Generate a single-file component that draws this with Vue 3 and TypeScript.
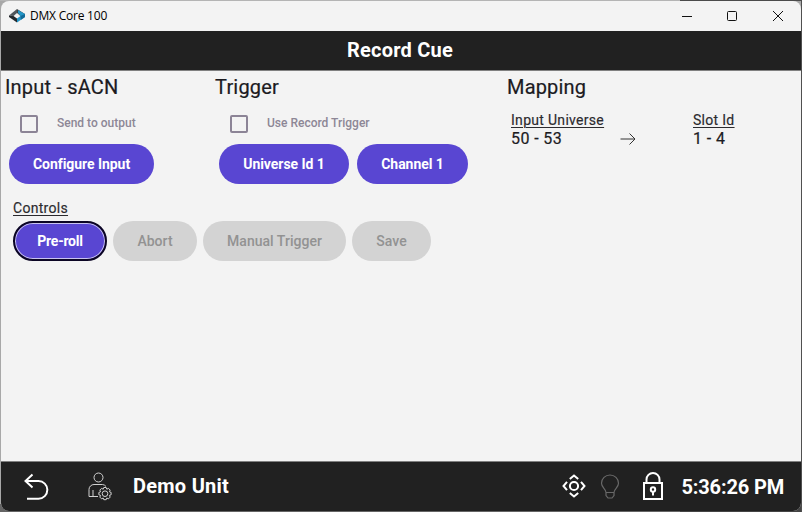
<script setup lang="ts">
import { ref } from 'vue'

interface ControlAction {
  label: string
  enabled: boolean
}

const sendToOutput = ref(false)
const useTrigger = ref(false)
const controls: ControlAction[] = [
  { label: 'Pre-roll', enabled: true },
  { label: 'Abort', enabled: false },
  { label: 'Manual Trigger', enabled: false },
  { label: 'Save', enabled: false },
]
</script>

<template>
  <div class="desktop">
    <div class="window">
      <div class="titlebar">
        <svg class="logo" width="16" height="14" viewBox="0 0 16 14">
          <path d="M0 6.5 8 0v4L4.5 7z" fill="#50565b" />
          <path d="M0 6.5 4.5 7 8 9.5V13.500L0 8z" fill="#24282c" />
          <path d="M8 0l8 5-4.500 2L8 4z" fill="#3d4246" />
          <path d="M9 1l7 4v3l-8 5.500v-4L11.500 7 9 4z" fill="#2396c8" />
          <path d="M11.500 7 16 5v3l-4 2.800z" fill="#126a98" />
        </svg>
        <span class="app-name">DMX Core 100</span>
        <div class="caption-buttons">
          <svg width="10" height="10" viewBox="0 0 10 10"><path d="M0 5.500h10" /></svg>
          <svg width="10" height="10" viewBox="0 0 10 10"><rect x=".5" y=".5" width="9" height="9" rx="1" /></svg>
          <svg width="10" height="10" viewBox="0 0 10 10"><path d="M0 0l10 10M10 0L0 10" /></svg>
        </div>
      </div>

      <header class="page-header"><span>Record Cue</span></header>

      <main class="content">
        <div class="columns">
          <section class="input">
            <h2 class="h-input">Input - sACN</h2>
            <div class="check" @click="sendToOutput = !sendToOutput">
              <span class="box" :class="{ checked: sendToOutput }"></span>
              <span class="l-send">Send to output</span>
            </div>
            <div class="buttons"><button class="pill w-config">Configure Input</button></div>
          </section>
          <section class="trigger">
            <h2 class="h-trigger">Trigger</h2>
            <div class="check" @click="useTrigger = !useTrigger">
              <span class="box" :class="{ checked: useTrigger }"></span>
              <span class="l-use">Use Record Trigger</span>
            </div>
            <div class="buttons">
              <button class="pill w-universe">Universe Id 1</button>
              <button class="pill w-channel">Channel 1</button>
            </div>
          </section>
          <section class="mapping">
            <h2 class="h-mapping">Mapping</h2>
            <div class="map-grid">
              <span class="caption">Input Universe</span>
              <span></span>
              <span class="caption">Slot Id</span>
              <span class="value">50 - 53</span>
              <svg class="arrow" width="16" height="14" viewBox="0 0 16 14"><path d="M.5 7h14.500M9.500 1.500 15 7l-5.500 5.500" /></svg>
              <span class="value">1 - 4</span>
            </div>
          </section>
        </div>
        <div class="controls">
          <span class="caption">Controls</span>
          <div class="control-row">
            <button
              v-for="(c, i) in controls"
              :key="c.label"
              class="pill"
              :class="['c' + i, { focused: i === 0 }]"
              :disabled="!c.enabled"
            >{{ c.label }}</button>
          </div>
        </div>
      </main>

      <footer class="footer">
        <svg class="back" width="26" height="28" viewBox="0 0 26 28">
          <path d="M8.500 1.500 1.500 8l7 6.500M1.800 8H14.500a8.800 8.800 0 0 1 0 17.700H3" />
        </svg>
        <svg class="user" width="24" height="29" viewBox="0 0 24 29">
          <circle cx="10.500" cy="5.500" r="4.500" />
          <path d="M10 24.500H1V17.500a5 5 0 0 1 5-5H14.500a5 5 0 0 1 3.500 2M5 18v6.500" />
          <circle cx="17" cy="21.700" r="2.800" />
          <path d="M15.800 15.500h2.400l.6 1.700 1.700-.8 1.700 1.700-.8 1.700 1.700.6v2.400l-1.700.6.8 1.700-1.700 1.700-1.700-.8-.6 1.700h-2.400l-.6-1.700-1.700.8-1.700-1.700.8-1.700-1.700-.6v-2.400l1.700-.6-.8-1.700 1.700-1.700 1.700.8z" />
        </svg>
        <span class="unit">Demo Unit</span>
        <svg class="target" width="24" height="24" viewBox="0 0 24 24">
          <circle cx="12" cy="12" r="4.100" />
          <path d="M7.800 5 12 1.500 16.200 5M7.800 19l4.200 3.500 4.200-3.500M5 7.800 1.500 12 5 16.200M19 7.800l3.500 4.200-3.500 4.200" />
        </svg>
        <svg class="bulb" width="20" height="26" viewBox="0 0 20 26">
          <path d="M6 18.500C6 15 1.500 13.500 1.500 9.300a8.500 8.300 0 0 1 17 0c0 4.200-4.500 5.700-4.500 9.200zM6 18.500v3l2 2.500h4l2-2.500v-3" />
        </svg>
        <svg class="lock" width="20" height="28" viewBox="0 0 20 28">
          <path d="M1 11h18v16H1zM3.500 11V7.500a6.500 6.500 0 0 1 13 0V11" />
          <circle cx="10" cy="17.500" r="2.200" />
          <path d="M10 19.500v4" />
        </svg>
        <span class="clock">5:36:26 PM</span>
      </footer>
    </div>
  </div>
</template>

<style>
body {
  margin: 0;
  overflow: hidden;
}
</style>

<style scoped>
.desktop {
  box-sizing: border-box;
  width: 802px;
  height: 512px;
  padding: 1px;
  background:
    linear-gradient(90deg, #b4b4b4 680px, #4b4b4b 680px) top / 100% 1px no-repeat,
    linear-gradient(#505050, #505050) right / 1px 100% no-repeat,
    linear-gradient(90deg, #656565 680px, #444 680px) bottom / 100% 8px no-repeat,
    #a8a8a8;
  font-family: Roboto, "Liberation Sans", sans-serif;
  color: #1c1b1f;
}
.window {
  display: flex;
  flex-direction: column;
  width: 800px;
  height: 510px;
  border-radius: 8px;
  overflow: hidden;
  background: #f3f3f3;
}
.titlebar {
  display: flex;
  align-items: center;
  height: 30px;
  padding: 0 18px 0 8px;
}
.app-name {
  margin-left: 5px;
  font: 12px/16px "Open Sans", "Noto Sans", sans-serif;
  letter-spacing: -0.22px;
  color: #000;
}
.caption-buttons {
  display: flex;
  gap: 36px;
  margin-left: auto;
}
.caption-buttons svg {
  fill: none;
  stroke: #111;
  stroke-width: 1;
  overflow: visible;
}
.caption-buttons svg:first-child {
  margin-right: -1px;
}
.page-header {
  display: flex;
  align-items: center;
  justify-content: center;
  box-sizing: border-box;
  height: 40px;
  padding: 0 2px 2px 0;
  border-bottom: 1px solid #808080;
  background: #212121;
  color: #fff;
  font-size: 20px;
  font-weight: 700;
  letter-spacing: 0.2px;
}
.content {
  flex: 1;
}
.columns {
  display: grid;
  grid-template-columns: 210px 292px 1fr;
  height: 128px;
  padding-left: 4px;
}
h2 {
  margin: 0;
  padding-top: 4px;
  font-size: 20px;
  line-height: 24px;
  font-weight: 400;
  letter-spacing: 0.18px;
  -webkit-text-stroke: 0.2px currentColor;
  white-space: nowrap;
}
.check {
  display: flex;
  align-items: center;
  gap: 19px;
  height: 18px;
  margin: 16px 0 11px 15px;
  font-size: 12px;
  line-height: 16px;
  font-weight: 500;
  color: #8d8796;
}
.check span:last-child {
  position: relative;
  top: -1px;
}
.box {
  box-sizing: border-box;
  width: 18px;
  height: 18px;
  border: 2px solid #8c8496;
  border-radius: 2px;
}
.box.checked {
  background: #5946d2;
}
.buttons {
  display: flex;
  gap: 8px;
  padding-left: 4px;
}
.pill {
  box-sizing: border-box;
  height: 40px;
  padding: 0;
  border: 0;
  border-radius: 20px;
  background: #5946d2;
  color: #fff;
  font: 700 14px/20px Roboto, "Liberation Sans", sans-serif;
  letter-spacing: -0.05px;
  white-space: nowrap;
}
.pill:disabled {
  background: #d3d3d3;
  color: #929292;
  font-weight: 500;
  letter-spacing: 0.02px;
}
.w-config { width: 145px; }
.w-universe { width: 130px; }
.w-channel { width: 111px; }
.map-grid {
  display: grid;
  grid-template-columns: 109px 73px 1fr;
  align-items: center;
  padding: 12px 0 0 4px;
}
.caption {
  font-size: 14px;
  line-height: 18px;
  letter-spacing: 0.3px;
  color: #2b2a2e;
  -webkit-text-stroke: 0.15px currentColor;
  text-decoration: underline;
  text-decoration-thickness: 1px;
  text-underline-offset: 2px;
}
.value {
  font-size: 16px;
  line-height: 20px;
  letter-spacing: 0.4px;
  -webkit-text-stroke: 0.2px currentColor;
}
.arrow {
  fill: none;
  stroke: #333;
  stroke-width: 1;
}
.controls {
  display: flex;
  flex-direction: column;
  align-items: flex-start;
  padding-left: 12px;
}
.control-row {
  display: flex;
  gap: 6px;
  margin-top: 4px;
}
.c0 { width: 94px; letter-spacing: -0.25px; }
.c1 { width: 84px; }
.c2 { width: 143px; }
.c3 { width: 79px; }
.focused {
  border: 2px solid #0b0524;
  box-shadow: inset 0 0 0 1px #c9c3f0;
}
.footer {
  display: flex;
  align-items: center;
  box-sizing: border-box;
  height: 50px;
  padding: 0 17px 0 23px;
  border-top: 1px solid #808080;
  background: #212121;
  color: #fff;
  font-size: 20px;
  font-weight: 700;
}
.footer svg {
  flex: none;
  fill: none;
  stroke: #fff;
}
.back { stroke-width: 2; margin-top: 1px; }
.user { margin: -1px 0 0 38px; stroke-width: 1; opacity: 0.8; }
.unit { margin: -2px 0 0 21px; letter-spacing: 0.25px; }
.target { margin: -2px 0 0 auto; stroke-width: 2; }
.bulb { margin: 0 0 0 14px; stroke-width: 1.2; opacity: 0.32; }
.lock { margin: -2px 0 0 23px; stroke-width: 2; }
.clock { margin-left: 18px; letter-spacing: -0.15px; }
</style>
